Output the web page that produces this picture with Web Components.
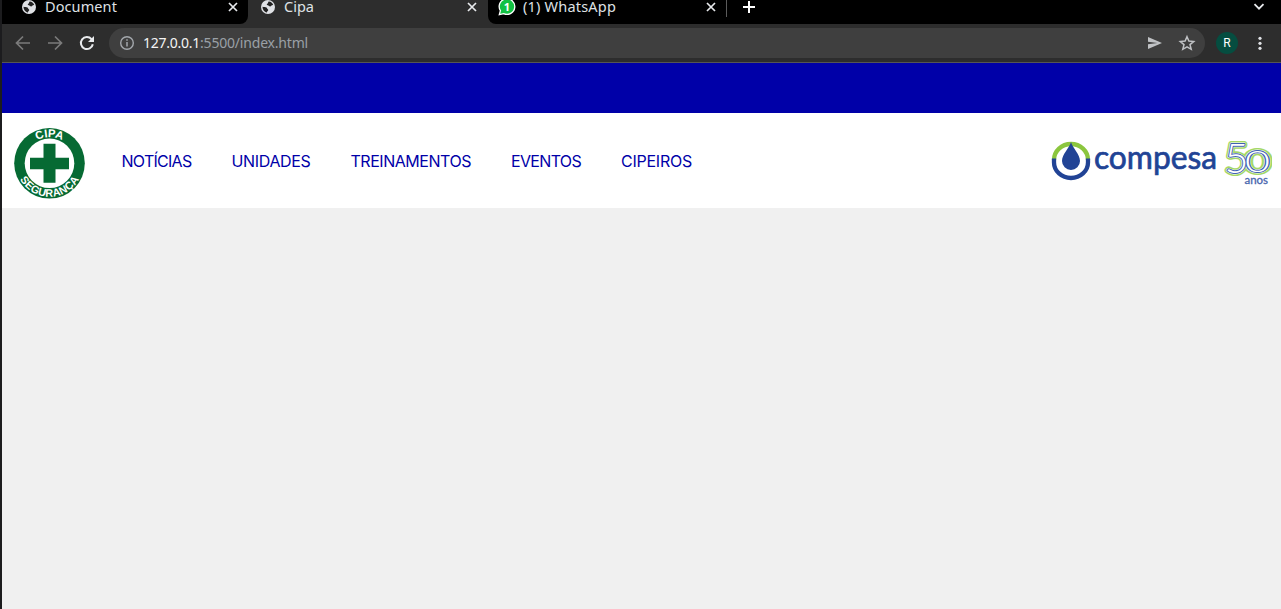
<!DOCTYPE html>
<html lang="pt-BR">
<head>
<meta charset="utf-8">
<title>Cipa</title>
<style>
html,body{margin:0;height:100%;background:#f0f0f0;overflow:hidden;font-family:"Noto Sans","Open Sans",sans-serif}
</style>
</head>
<body>
<app-window></app-window>
<script>
function define(name, html, ready) {
  const t = document.createElement('template');
  t.innerHTML = html;
  customElements.define(name, class extends HTMLElement {
    connectedCallback() {
      if (this.shadowRoot) return;
      this.attachShadow({mode: 'open'}).append(t.content.cloneNode(true));
      if (ready) ready(this, this.shadowRoot);
    }
  });
}

/* A one-line label whose tracking is adjusted to fill a given width. */
define('fit-label', `<style>:host{display:block;flex:none;white-space:nowrap}span{display:inline-block}</style><span><slot></slot></span>`,
  (el, root) => {
    const w = +el.getAttribute('width');
    el.style.width = w + 'px';
    const s = root.querySelector('span');
    const n = el.textContent.length;
    s.style.letterSpacing = ((w - s.getBoundingClientRect().width) / n) + 'px';
  });

const globe = '<svg width="16" height="16" viewBox="0 0 16 16"><circle cx="8" cy="8" r="7" fill="#dfe1e5"/><path d="M2.500 7.800C4 8.200 5.500 8 6.500 8.600c1 .5.300 1.300 1.300 1.700.8.400.4 1.500-.3 1.900-.6.400-.3 1.300-1.200 1.300C4 12.800 2.400 10.300 2.500 7.800M8.800 2.600c2 .1 3.700 1.300 4.400 3.200-.6.700-1.600.3-2 1-.5.900-1.700.7-2.200.1C8.400 6.300 7 6.600 6.800 5.600c-.2-.9 1-1 1.200-1.600.2-.5.200-1.200.8-1.400" fill="#222"/></svg>';
const chat = '<svg width="18" height="18" viewBox="0 0 18 18"><path d="M1.3 16.7 2.4 12.7A7.8 7.8 0 1 1 5.7 15.6z" fill="#12c143" stroke="#fff" stroke-width="1.3"/><text x="9" y="13" text-anchor="middle" font-family="Noto Sans,sans-serif" font-weight="700" font-size="11" fill="#fff">1</text></svg>';

define('browser-tab', `<style>
:host{display:flex;box-sizing:border-box;height:24px;width:239px;flex:none;background:#000;color:#dfe1e5;font-size:14.5px;align-items:flex-start;padding:0 10px 0 12px}
:host([active]){background:#2d2d2d;width:240px;padding-right:11px}
:host([first]){width:246px;padding:0 10px 0 19px;border-bottom-right-radius:8px}
:host([last]){padding:0 11px 0 10px;border-bottom-left-radius:8px}
.i{width:24px;height:18px;flex:none;margin-top:-1px}:host([last]) .i{width:25px;margin-top:-2px}
.i svg{display:block}fit-label{line-height:20px;margin-top:-4px}
.x{margin:2px 0 0 auto;display:block}
</style><span class="i"></span><slot></slot><svg class="x" width="10" height="10" viewBox="0 0 10 10"><path d="m1 1 8 8m0-8-8 8" stroke="#e8eaed" stroke-width="1.7"/></svg>`,
  (el, root) => {
    root.querySelector('.i').innerHTML = el.hasAttribute('last') ? chat : globe;
    const l = document.createElement('fit-label');
    l.setAttribute('width', el.getAttribute('w'));
    l.textContent = el.textContent;
    root.querySelector('slot').replaceWith(l);
  });

define('tab-strip', `<style>
:host{display:flex;height:24px;background:linear-gradient(90deg,#2d2d2d 500px,#000 500px)}
.s{width:1px;height:17px;background:#5b5b5b;margin-left:-1px}
.p{margin:1px 0 0 16px}.c{margin:3px 16px 0 auto}
</style>
<browser-tab first w="72">Document</browser-tab><browser-tab active w="30">Cipa</browser-tab><browser-tab last w="93">(1) WhatsApp</browser-tab><i class="s"></i>
<svg class="p" width="12" height="12"><path d="M6 0v12M0 6h12" stroke="#fff" stroke-width="2"/></svg>
<svg class="c" width="12" height="8"><path d="m1.5 1.2 4.5 4.5 4.5-4.5" fill="none" stroke="#e8eaed" stroke-width="1.8"/></svg>`);

define('tool-bar', `<style>
:host{display:flex;box-sizing:border-box;height:39px;background:#2d2d2d;border-bottom:1px solid #555;align-items:center;padding:0 11.500px 0 11px}
svg{display:block;flex:none}.n{margin-right:12px}
.o{display:flex;align-items:center;width:1096px;height:30px;box-sizing:border-box;border-radius:15px;background:#3f3f3f;font-size:14px;color:#9aa0a6;padding:0 8px 0 8px}
.o b{font-weight:400;color:#f4f4f4}.o fit-label{margin:-2px 0 0 6px}.o fit-label+fit-label{margin-left:0}
.a{margin-left:auto}.r{width:22px;height:22px;border-radius:50%;background:#054d40;color:#fff;font:12px/22px Roboto,sans-serif;text-align:center;margin-left:11px}
</style>
<svg class="n" width="20" height="20" viewBox="0 0 20 20"><path d="M17 10H4m6-6.500L3.500 10l6.500 6.500" fill="none" stroke="#7b7b7b" stroke-width="1.7"/></svg>
<svg class="n" width="20" height="20" viewBox="0 0 20 20"><path d="M3 10h13m-6-6.500 6.500 6.500-6.500 6.500" fill="none" stroke="#7b7b7b" stroke-width="1.7"/></svg>
<svg class="n" width="20" height="20" viewBox="0 0 20 20"><path d="M15.8 11.200A6 6 0 1 1 14.500 6.200L16 7.700" fill="none" stroke="#e8eaed" stroke-width="2"/><path d="M17 3v6h-6z" fill="#e8eaed"/></svg>
<div class="o">
<svg width="20" height="20" viewBox="0 0 20 20"><circle cx="10" cy="10" r="6.300" fill="none" stroke="#a4a8ad" stroke-width="1.400"/><path d="M10 9v4.500M10 6.300v1.500" stroke="#a4a8ad" stroke-width="1.500"/></svg>
<fit-label width="57"><b>127.0.0.1</b></fit-label><fit-label width="108">:5500/index.html</fit-label>
<svg class="a" width="18" height="18" viewBox="0 0 18 18"><path d="m2 3 14 6-14 6v-4.700L11.500 9 2 7.700z" fill="#c0c2c5"/></svg>
<svg style="margin-left:14px;margin-right:1px" width="18" height="18" viewBox="0 0 18 18"><path d="m9 2.700 1.900 4.400 4.800.4-3.700 3.100 1.200 4.700L9 12.800l-4.200 2.500L6 10.600 2.300 7.500l4.800-.4z" fill="none" stroke="#c0c2c5" stroke-width="1.500"/></svg>
</div><div class="r">R</div>
<svg style="margin-left:auto" width="20" height="20" viewBox="0 0 20 20"><g fill="#dfe1e5"><circle cx="10" cy="5.300" r="1.600"/><circle cx="10" cy="10.300" r="1.600"/><circle cx="10" cy="15.300" r="1.600"/></g></svg>`);

define('cipa-logo', `<style>:host{display:block;width:72px;height:72px}svg{display:block}</style>
<svg width="72" height="72" viewBox="0.500 0.700 72 72"><circle cx="36" cy="36" r="35.300" fill="#066a33"/><circle cx="36" cy="36" r="24.800" fill="#fff"/><path d="M30 16.500h12v14h13.500v11.500H42v13.500H30V42H16.500V30.500H30z" fill="#066a33"/>
<path id="t" d="M9.800 36a26.200 26.200 0 0 1 52.400 0" fill="none"/><path id="b" d="M2.500 36a33.500 33.500 0 0 0 67 0" fill="none"/>
<g font-family="Liberation Sans,sans-serif" font-weight="700" fill="#fff" text-anchor="middle"><text font-size="11.300"><textPath href="#t" startOffset="50%">CIPA</textPath></text><text font-size="10.800"><textPath href="#b" startOffset="50%" textLength="72">SEGURANÇA</textPath></text></g></svg>`);

define('compesa-logo', `<style>:host{display:block;width:222px;height:50px}svg{display:block}</style>
<svg width="222" height="50" viewBox="1050 137 222 50">
<g fill="none" stroke-width="4.300"><path d="M1054 160a17 16 0 0 1 34 0" stroke="#8bc63e"/><path d="M1054 158.500v4a17 15.500 0 0 0 34 0v-4" stroke="#214395"/></g>
<path d="M1071 142c1.500 6 9 12 9 19a9 9 0 0 1-18 0c0-7 7.500-13 9-19" fill="#214395"/>
<text x="1094" y="169" font-family="Lato,sans-serif" font-size="32.500" fill="#214395" stroke="#214395" stroke-width=".700" stroke-linejoin="round" textLength="123" lengthAdjust="spacingAndGlyphs">compesa</text>
<g font-family="Lato,sans-serif" stroke-linejoin="round">
<use href="#y" fill="none" stroke="#a5d867" stroke-width="6"/><use href="#y" fill="none" stroke="#fff" stroke-width="2.800"/><use href="#y" fill="none" stroke="#3f62b2" stroke-width="2"/>
<g fill="#fff" stroke="none"><g id="y"><text font-weight="300" font-size="42" transform="translate(1224.500 172.500)" textLength="24" lengthAdjust="spacingAndGlyphs">5</text><text font-weight="300" font-size="29.500" transform="translate(1245 172)" textLength="25" lengthAdjust="spacingAndGlyphs">0</text></g></g></g>
<text x="1244.500" y="183.500" font-family="Lato,sans-serif" font-weight="400" stroke="#4866ae" stroke-width=".3" font-size="11" fill="#4866ae" textLength="23.500" lengthAdjust="spacingAndGlyphs">anos</text></svg>`);

define('site-header', `<style>
:host{display:block}.b{height:50px;background:#0000a8}
.m{height:95px;background:#fff;display:flex;align-items:center;padding:0 9px 0 12px;box-sizing:border-box}
cipa-logo{margin-top:6px;flex:none}
nav{display:flex;gap:40px;margin-left:35.500px;color:#0000a8;font:16px/24px Inter,sans-serif;padding-top:1px}
compesa-logo{margin-left:auto;margin-top:2px}
</style><div class="b"></div><div class="m"><cipa-logo></cipa-logo>
<nav><fit-label width="70">NOTÍCIAS</fit-label><fit-label width="79">UNIDADES</fit-label><fit-label width="120.500">TREINAMENTOS</fit-label><fit-label width="70">EVENTOS</fit-label><fit-label width="71">CIPEIROS</fit-label></nav>
<compesa-logo></compesa-logo></div>`);

define('app-window', `<style>
:host{display:block;height:100vh;box-sizing:border-box;border-left:2px solid #1c1c1e;background:#f0f0f0}
</style><tab-strip></tab-strip><tool-bar></tool-bar><site-header></site-header>`);
</script>
</body>
</html>
